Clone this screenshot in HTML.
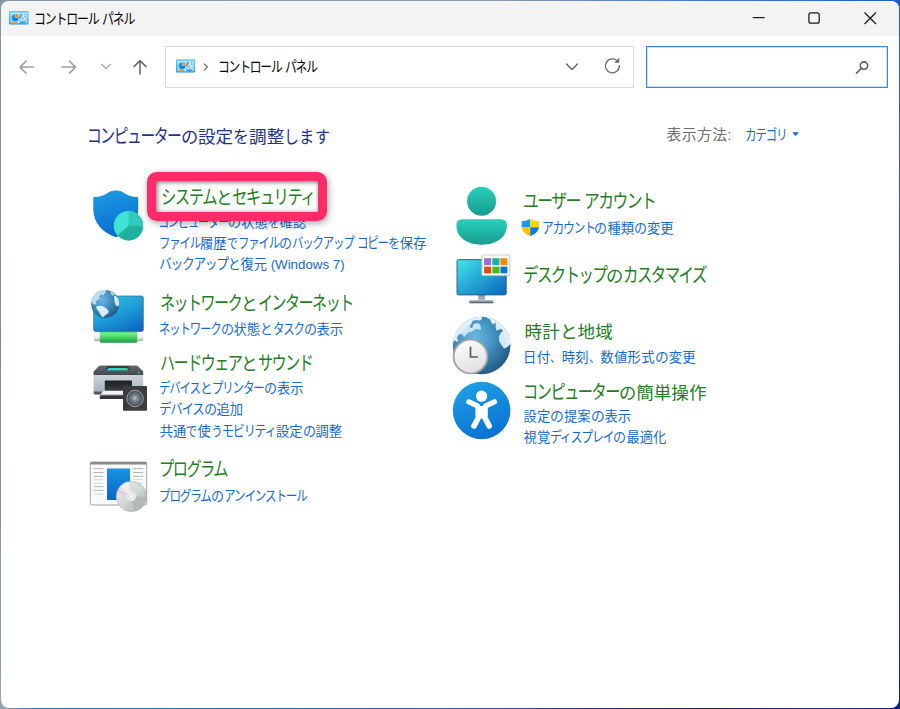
<!DOCTYPE html>
<html lang="ja">
<head>
<meta charset="utf-8">
<title>コントロール パネル</title>
<style>
html,body{margin:0;padding:0;}
body{width:900px;height:709px;overflow:hidden;position:relative;background:#8a98a8;
  font-family:"Liberation Sans","Noto Sans CJK JP",sans-serif;}
.edge{position:absolute;}
#win{position:absolute;left:1px;top:1px;width:897.7px;height:706.7px;background:#fff;border-radius:8px;overflow:hidden;}
#tb{position:absolute;left:0;top:0;width:100%;height:35px;background:#f3f3f3;}
.t{position:absolute;white-space:pre;}
.w{display:inline-block;vertical-align:baseline;white-space:pre;letter-spacing:0;}
.s{display:inline-block;transform-origin:0 50%;white-space:pre;}
svg{position:absolute;overflow:visible;}
.box{position:absolute;box-sizing:border-box;background:#fff;}
</style>
</head>
<body>
<div class="edge" style="left:0;top:699px;width:900px;height:10px;background:linear-gradient(to right,#8a9ab0 0,#3a70b0 4%,#2e5a98 50%,#16204c 80%,#1a3a9c 92%,#0c1f8c 100%)"></div>
<div class="edge" style="left:0;top:0;width:900px;height:10px;background:linear-gradient(to right,#8796a6 0%,#8a9aa8 55%,#4a7ec8 75%,#1c5fd0 100%)"></div>
<div class="edge" style="left:0;top:0;width:8px;height:709px;background:linear-gradient(to bottom,#8796a6 0,#7e8c9a 50%,#94a2b4 100%)"></div>
<div class="edge" style="left:892px;top:0;width:8px;height:709px;background:linear-gradient(to bottom,#1c5fd0 0,#2a58b8 20%,#2a4898 45%,#1a2a8c 80%,#0c1f8c 100%)"></div>
<div id="win"><div id="tb"></div></div>

<div class="box" style="left:165px;top:46px;width:469.4px;height:42px;border:1px solid #d9d9d9;"></div>
<div class="box" style="left:646px;top:46px;width:242px;height:42px;border:1px solid #3b86d6;box-shadow:inset 0 0 0 1px #cfe2f6;"></div>

<!-- window buttons -->
<svg style="left:0;top:0" width="900" height="100" viewBox="0 0 900 100" fill="none" stroke="#1a1a1a" stroke-width="1.25">
 <path d="M752.8 17.6H764.6"/>
 <rect x="808.9" y="12.9" width="10.3" height="10.3" rx="2"/>
 <path d="M864.5 12.5L876 24M876 12.5L864.5 24"/>
 <!-- nav arrows -->
 <g stroke="#a0a0a0" stroke-width="1.5" stroke-linecap="round" stroke-linejoin="round" transform="translate(0,0.6)">
  <path d="M33.5 66.5H20M26 60.5L20 66.5L26 72.5"/>
  <path d="M62 66.5H75.5M69.5 60.5L75.5 66.5L69.5 72.5"/>
  <path d="M101.5 63.5L106 68L110.5 63.5" stroke-width="1.3"/>
 </g>
 <g stroke="#666" stroke-width="1.5" stroke-linecap="round" stroke-linejoin="round">
  <path d="M140 74V60.6M134 66.6L140 60.6L146 66.6"/>
  <path d="M566.5 64L572 69.5L577.5 64"/>
  <path d="M204.3 63.8L207.5 67L204.3 70.2" stroke-width="1.1"/>
 </g>
 <!-- refresh -->
 <g stroke="#6a6a6a" stroke-width="1.3" stroke-linecap="round" stroke-linejoin="round">
  <path d="M619.4 65.6A7 7 0 1 1 617.4 60.9"/>
  <path d="M618.8 58.6V62.3H615" fill="#6a6a6a" stroke-width="1.1"/>
 </g>
 <!-- search icon -->
 <g stroke="#5c5c5c" stroke-width="1.6" stroke-linecap="round">
  <circle cx="864" cy="65.6" r="3.7"/>
  <path d="M861.3 68.4L856.4 73.2"/>
 </g>
</svg>

<svg width="0" height="0" style="left:0;top:0">
 <defs>
  <linearGradient id="cpo" x1="0" y1="0" x2="0" y2="1"><stop offset="0" stop-color="#62ccf5"/><stop offset="1" stop-color="#2f9cec"/></linearGradient>
  <linearGradient id="cpi" x1="0" y1="0" x2="0" y2="1"><stop offset="0" stop-color="#b4e6fb"/><stop offset="1" stop-color="#9ad2f5"/></linearGradient>
  <linearGradient id="cpp" x1="0" y1="0" x2="1" y2="1"><stop offset="0" stop-color="#27a6ee"/><stop offset="1" stop-color="#0768d4"/></linearGradient>
  <symbol id="cpicon" viewBox="0 0 20 14">
   <rect x="0" y="0" width="20" height="14" rx="1.2" fill="url(#cpo)"/>
   <rect x="1.4" y="1.6" width="17.2" height="10.9" rx="0.4" fill="url(#cpi)"/>
   <path d="M6.2 3.4A3.4 3.4 0 1 0 9.6 6.8H6.2Z" fill="url(#cpp)"/>
   <path d="M6.9 3.1A3.2 3.2 0 0 1 9.9 6.1H6.9Z" fill="#f08a0c"/>
   <path d="M9.9 6.6H11.8V3.6H13.6" fill="none" stroke="#1767c6" stroke-width="0.8"/>
   <rect x="13.9" y="3.1" width="1.7" height="0.9" fill="#fff"/><rect x="15.9" y="3.1" width="0.9" height="0.9" fill="#2d7fd8"/>
   <rect x="13.9" y="5.2" width="1.7" height="0.9" fill="#fff"/><rect x="15.9" y="5.2" width="0.9" height="0.9" fill="#2d7fd8"/>
   <rect x="13.7" y="7.3" width="0.9" height="0.9" fill="#2d7fd8"/><rect x="14.8" y="7.3" width="1.7" height="0.9" fill="#fff"/>
   <rect x="2.8" y="11" width="5.9" height="1" rx="0.4" fill="#ee8a10"/>
   <rect x="8.9" y="11" width="1.4" height="1" rx="0.3" fill="#fff"/>
   <rect x="10.9" y="11" width="5.8" height="1" rx="0.4" fill="#0f6fd3"/>
  </symbol>
 </defs>
</svg>
<svg style="left:9.4px;top:11px" width="19.7" height="13.8"><use href="#cpicon" width="19.7" height="13.8"/></svg>
<svg style="left:175.8px;top:59px" width="19.3" height="13.8"><use href="#cpicon" width="19.3" height="13.8"/></svg>


<div class="t" id="t_title" aria-label="コントロール パネル" style="left:34.4px;top:9px;font-size:13.2px;line-height:20px;color:#000"><span class="w" style="width:64.37px"><span class="s" style="transform:scaleX(0.8210);font-size:14.52px;letter-spacing:-1.45px">コントロール</span></span> <span class="w" style="width:32.19px"><span class="s" style="transform:scaleX(0.8210);font-size:14.52px;letter-spacing:-1.45px">パネル</span></span></div>
<div class="t" id="t_addr" aria-label="コントロール パネル" style="left:217.8px;top:57px;font-size:13.2px;line-height:20px;color:#000"><span class="w" style="width:63.55px"><span class="s" style="transform:scaleX(0.8105);font-size:14.52px;letter-spacing:-1.45px">コントロール</span></span> <span class="w" style="width:31.77px"><span class="s" style="transform:scaleX(0.8105);font-size:14.52px;letter-spacing:-1.45px">パネル</span></span></div>
<div class="t" id="t_head" aria-label="コンピューターの設定を調整します" style="left:87.3px;top:123px;font-size:17.6px;line-height:26px;color:#1e3287"><span class="w" style="width:93.47px"><span class="s" style="transform:scaleX(0.7524);font-size:19.71px;letter-spacing:-1.94px">コンピューター</span></span><span class="w" style="width:17.26px"><span class="s" style="transform:scaleX(0.9800)">の</span></span>設定<span class="w" style="width:15.85px"><span class="s" style="transform:scaleX(0.9000)">を</span></span>調整<span class="w" style="width:14.97px"><span class="s" style="transform:scaleX(0.8500)">し</span></span><span class="w" style="width:15.32px"><span class="s" style="transform:scaleX(0.8700)">ま</span></span><span class="w" style="width:14.97px"><span class="s" style="transform:scaleX(0.8500)">す</span></span></div>
<div class="t" id="t_view" aria-label="表示方法:" style="left:666.6px;top:124px;font-size:14.8px;line-height:22px;color:#6e6e6e;letter-spacing:0.39px">表示方法:</div>
<div class="t" id="t_cat" aria-label="カテゴリ" style="left:744.7px;top:125px;font-size:13.3px;line-height:20px;color:#1469d0"><span class="w" style="width:41.50px"><span class="s" style="transform:scaleX(0.8129);font-size:14.23px;letter-spacing:-1.46px">カテゴリ</span></span></div>
<div class="t" id="t_sys" aria-label="システムとセキュリティ" style="left:160.5px;top:184px;font-size:17.6px;line-height:26px;color:#237d23"><span class="w" style="width:55.04px"><span class="s" style="transform:scaleX(0.7817);font-size:19.71px;letter-spacing:-1.94px">システム</span></span><span class="w" style="width:16.73px"><span class="s" style="transform:scaleX(0.9500)">と</span></span><span class="w" style="width:82.33px"><span class="s" style="transform:scaleX(0.7817);font-size:19.71px;letter-spacing:-1.94px">セキュリティ</span></span></div>
<div class="t" id="l_sys1" aria-label="コンピューターの状態を確認" style="left:158.2px;top:212px;font-size:13.3px;line-height:20px;color:#1469d0"><span class="w" style="width:69.97px"><span class="s" style="transform:scaleX(0.7835);font-size:14.23px;letter-spacing:-1.46px">コンピューター</span></span><span class="w" style="width:13.03px"><span class="s" style="transform:scaleX(0.9800)">の</span></span>状態<span class="w" style="width:11.97px"><span class="s" style="transform:scaleX(0.9000)">を</span></span>確認</div>
<div class="t" id="l_sys2" aria-label="ファイル履歴でファイルのバックアップ コピーを保存" style="left:159.0px;top:233px;font-size:13.3px;line-height:20px;color:#1469d0"><span class="w" style="width:41.05px"><span class="s" style="transform:scaleX(0.8042);font-size:14.23px;letter-spacing:-1.46px">ファイル</span></span>履歴<span class="w" style="width:11.04px"><span class="s" style="transform:scaleX(0.8300)">で</span></span><span class="w" style="width:41.05px"><span class="s" style="transform:scaleX(0.8042);font-size:14.23px;letter-spacing:-1.46px">ファイル</span></span><span class="w" style="width:13.03px"><span class="s" style="transform:scaleX(0.9800)">の</span></span><span class="w" style="width:61.57px"><span class="s" style="transform:scaleX(0.8042);font-size:14.23px;letter-spacing:-1.46px">バックアップ</span></span> <span class="w" style="width:30.78px"><span class="s" style="transform:scaleX(0.8042);font-size:14.23px;letter-spacing:-1.46px">コピー</span></span><span class="w" style="width:11.97px"><span class="s" style="transform:scaleX(0.9000)">を</span></span>保存</div>
<div class="t" id="l_sys3" aria-label="バックアップと復元 (Windows 7)" style="left:159.0px;top:254px;font-size:13.3px;line-height:20px;color:#1469d0"><span class="w" style="width:68.78px"><span class="s" style="transform:scaleX(0.8983);font-size:14.23px;letter-spacing:-1.46px">バックアップ</span></span><span class="w" style="width:12.63px"><span class="s" style="transform:scaleX(0.9500)">と</span></span>復元 (Windows 7)</div>
<div class="t" id="t_net" aria-label="ネットワークとインターネット" style="left:159.9px;top:290px;font-size:17.6px;line-height:26px;color:#237d23"><span class="w" style="width:81.18px"><span class="s" style="transform:scaleX(0.7623);font-size:19.71px;letter-spacing:-1.94px">ネットワーク</span></span><span class="w" style="width:16.73px"><span class="s" style="transform:scaleX(0.9500)">と</span></span><span class="w" style="width:94.70px"><span class="s" style="transform:scaleX(0.7623);font-size:19.71px;letter-spacing:-1.94px">インターネット</span></span></div>
<div class="t" id="l_net1" aria-label="ネットワークの状態とタスクの表示" style="left:159.0px;top:319px;font-size:13.3px;line-height:20px;color:#1469d0"><span class="w" style="width:61.52px"><span class="s" style="transform:scaleX(0.8035);font-size:14.23px;letter-spacing:-1.46px">ネットワーク</span></span><span class="w" style="width:13.03px"><span class="s" style="transform:scaleX(0.9800)">の</span></span>状態<span class="w" style="width:12.63px"><span class="s" style="transform:scaleX(0.9500)">と</span></span><span class="w" style="width:30.76px"><span class="s" style="transform:scaleX(0.8035);font-size:14.23px;letter-spacing:-1.46px">タスク</span></span><span class="w" style="width:13.03px"><span class="s" style="transform:scaleX(0.9800)">の</span></span>表示</div>
<div class="t" id="t_hw" aria-label="ハードウェアとサウンド" style="left:159.9px;top:350px;font-size:17.6px;line-height:26px;color:#237d23"><span class="w" style="width:81.41px"><span class="s" style="transform:scaleX(0.7644);font-size:19.71px;letter-spacing:-1.94px">ハードウェア</span></span><span class="w" style="width:16.73px"><span class="s" style="transform:scaleX(0.9500)">と</span></span><span class="w" style="width:54.27px"><span class="s" style="transform:scaleX(0.7644);font-size:19.71px;letter-spacing:-1.94px">サウンド</span></span></div>
<div class="t" id="l_hw1" aria-label="デバイスとプリンターの表示" style="left:159.0px;top:378px;font-size:13.3px;line-height:20px;color:#1469d0"><span class="w" style="width:40.85px"><span class="s" style="transform:scaleX(0.8071);font-size:14.23px;letter-spacing:-1.46px">デバイス</span></span><span class="w" style="width:12.63px"><span class="s" style="transform:scaleX(0.9500)">と</span></span><span class="w" style="width:51.49px"><span class="s" style="transform:scaleX(0.8071);font-size:14.23px;letter-spacing:-1.46px">プリンター</span></span><span class="w" style="width:13.03px"><span class="s" style="transform:scaleX(0.9800)">の</span></span>表示</div>
<div class="t" id="l_hw2" aria-label="デバイスの追加" style="left:159.0px;top:399px;font-size:13.3px;line-height:20px;color:#1469d0"><span class="w" style="width:44.53px"><span class="s" style="transform:scaleX(0.8799);font-size:14.23px;letter-spacing:-1.46px">デバイス</span></span><span class="w" style="width:13.03px"><span class="s" style="transform:scaleX(0.9800)">の</span></span>追加</div>
<div class="t" id="l_hw3" aria-label="共通で使うモビリティ設定の調整" style="left:159.8px;top:421px;font-size:13.3px;line-height:20px;color:#1469d0">共通<span class="w" style="width:11.04px"><span class="s" style="transform:scaleX(0.8300)">で</span></span>使<span class="w" style="width:11.70px"><span class="s" style="transform:scaleX(0.8800)">う</span></span><span class="w" style="width:53.51px"><span class="s" style="transform:scaleX(0.8500);font-size:14.23px;letter-spacing:-1.46px">モビリティ</span></span>設定<span class="w" style="width:13.03px"><span class="s" style="transform:scaleX(0.9800)">の</span></span>調整</div>
<div class="t" id="t_prg" aria-label="プログラム" style="left:159.1px;top:456px;font-size:17.6px;line-height:26px;color:#237d23"><span class="w" style="width:68.06px"><span class="s" style="transform:scaleX(0.7720);font-size:19.71px;letter-spacing:-1.94px">プログラム</span></span></div>
<div class="t" id="l_prg1" aria-label="プログラムのアンインストール" style="left:159.0px;top:486px;font-size:13.3px;line-height:20px;color:#1469d0"><span class="w" style="width:51.80px"><span class="s" style="transform:scaleX(0.8173);font-size:14.23px;letter-spacing:-1.46px">プログラム</span></span><span class="w" style="width:13.03px"><span class="s" style="transform:scaleX(0.9800)">の</span></span><span class="w" style="width:82.73px"><span class="s" style="transform:scaleX(0.8173);font-size:14.23px;letter-spacing:-1.46px">アンインストール</span></span></div>
<div class="t" id="t_usr" aria-label="ユーザー アカウント" style="left:522.7px;top:188px;font-size:17.6px;line-height:26px;color:#237d23"><span class="w" style="width:56.70px"><span class="s" style="transform:scaleX(0.8030);font-size:19.71px;letter-spacing:-1.94px">ユーザー</span></span> <span class="w" style="width:71.27px"><span class="s" style="transform:scaleX(0.8030);font-size:19.71px;letter-spacing:-1.94px">アカウント</span></span></div>
<div class="t" id="l_usr1" aria-label="アカウントの種類の変更" style="left:541.6px;top:218px;font-size:13.3px;line-height:20px;color:#1469d0"><span class="w" style="width:52.79px"><span class="s" style="transform:scaleX(0.8274);font-size:14.23px;letter-spacing:-1.46px">アカウント</span></span><span class="w" style="width:13.03px"><span class="s" style="transform:scaleX(0.9800)">の</span></span>種類<span class="w" style="width:13.03px"><span class="s" style="transform:scaleX(0.9800)">の</span></span>変更</div>
<div class="t" id="t_desk" aria-label="デスクトップのカスタマイズ" style="left:522.7px;top:262px;font-size:17.6px;line-height:26px;color:#237d23"><span class="w" style="width:83.34px"><span class="s" style="transform:scaleX(0.7826);font-size:19.71px;letter-spacing:-1.94px">デスクトップ</span></span><span class="w" style="width:17.26px"><span class="s" style="transform:scaleX(0.9800)">の</span></span><span class="w" style="width:82.88px"><span class="s" style="transform:scaleX(0.7826);font-size:19.71px;letter-spacing:-1.94px">カスタマイズ</span></span></div>
<div class="t" id="t_clk" aria-label="時計と地域" style="left:524.5px;top:319px;font-size:17.6px;line-height:26px;color:#237d23;letter-spacing:0.06px">時計<span class="w" style="width:17.73px"><span class="s" style="transform:scaleX(1.0070)">と</span></span>地域</div>
<div class="t" id="l_clk1" aria-label="日付、時刻、数値形式の変更" style="left:523.0px;top:348px;font-size:13.3px;line-height:20px;color:#1469d0;letter-spacing:0.36px">日付<span class="w" style="width:11.30px"><span class="s" style="transform:scaleX(0.8500)">、</span></span>時刻<span class="w" style="width:11.30px"><span class="s" style="transform:scaleX(0.8500)">、</span></span>数値形式<span class="w" style="width:13.81px"><span class="s" style="transform:scaleX(1.0388)">の</span></span>変更</div>
<div class="t" id="t_ease" aria-label="コンピューターの簡単操作" style="left:522.9px;top:379px;font-size:17.6px;line-height:26px;color:#237d23"><span class="w" style="width:96.01px"><span class="s" style="transform:scaleX(0.7728);font-size:19.71px;letter-spacing:-1.94px">コンピューター</span></span><span class="w" style="width:17.26px"><span class="s" style="transform:scaleX(0.9800)">の</span></span>簡単操作</div>
<div class="t" id="l_ease1" aria-label="設定の提案の表示" style="left:523.6px;top:407px;font-size:13.3px;line-height:20px;color:#1469d0;letter-spacing:0.03px">設定<span class="w" style="width:13.81px"><span class="s" style="transform:scaleX(1.0388)">の</span></span>提案<span class="w" style="width:13.81px"><span class="s" style="transform:scaleX(1.0388)">の</span></span>表示</div>
<div class="t" id="l_ease2" aria-label="視覚ディスプレイの最適化" style="left:523.6px;top:427px;font-size:13.3px;line-height:20px;color:#1469d0">視覚<span class="w" style="width:63.28px"><span class="s" style="transform:scaleX(0.8375);font-size:14.23px;letter-spacing:-1.46px">ディスプレイ</span></span><span class="w" style="width:13.03px"><span class="s" style="transform:scaleX(0.9800)">の</span></span>最適化</div>

<!-- dropdown arrow -->
<svg style="left:792.1px;top:131.7px" width="8" height="5" viewBox="0 0 8 5"><path d="M0.2 0.2H6.9L3.55 3.9Z" fill="#0a68cc"/></svg>

<svg style="left:0;top:0" width="900" height="709" viewBox="0 0 900 709">
<defs>
 <linearGradient id="gShield" x1="0" y1="0" x2="0.3" y2="1"><stop offset="0" stop-color="#1c9ce2"/><stop offset="1" stop-color="#0a6fd2"/></linearGradient>
 <linearGradient id="gMon" x1="0.2" y1="0" x2="0.8" y2="1"><stop offset="0" stop-color="#2fc0e2"/><stop offset="0.5" stop-color="#1e9cd6"/><stop offset="1" stop-color="#0c68c6"/></linearGradient>
 <linearGradient id="gMon2" x1="0" y1="0" x2="1" y2="1"><stop offset="0" stop-color="#40e4ea"/><stop offset="1" stop-color="#0a64c0"/></linearGradient>
 <radialGradient id="gGlobe" cx="0.38" cy="0.36" r="0.68"><stop offset="0" stop-color="#6cb8e4"/><stop offset="0.5" stop-color="#4290c0"/><stop offset="1" stop-color="#1f5a82"/></radialGradient>
 <linearGradient id="gGreen" x1="0" y1="0" x2="0" y2="1"><stop offset="0" stop-color="#5ee874"/><stop offset="0.25" stop-color="#66f07c"/><stop offset="1" stop-color="#1a9a40"/></linearGradient>
 <linearGradient id="gPipe" x1="0" y1="0" x2="0" y2="1"><stop offset="0" stop-color="#ffffff"/><stop offset="0.6" stop-color="#ececec"/><stop offset="1" stop-color="#a8a8a8"/></linearGradient>
 <linearGradient id="gTeal" x1="0" y1="0" x2="0" y2="1"><stop offset="0" stop-color="#28d0ba"/><stop offset="1" stop-color="#179c8e"/></linearGradient>
 <linearGradient id="gEase" x1="0.3" y1="0" x2="0.7" y2="1"><stop offset="0" stop-color="#1e9fe6"/><stop offset="1" stop-color="#0870d2"/></linearGradient>
 <linearGradient id="gBlueDoc" x1="0" y1="0" x2="0" y2="1"><stop offset="0" stop-color="#1a92e2"/><stop offset="1" stop-color="#0866c6"/></linearGradient>
 <linearGradient id="gPrnTop" x1="0" y1="0" x2="0" y2="1"><stop offset="0" stop-color="#666a70"/><stop offset="1" stop-color="#44474c"/></linearGradient>
 <linearGradient id="gPrnBody" x1="0" y1="0" x2="0" y2="1"><stop offset="0" stop-color="#ccd3da"/><stop offset="1" stop-color="#a4aeb8"/></linearGradient>
 <linearGradient id="gPrnPanel" x1="0" y1="0" x2="1" y2="0"><stop offset="0" stop-color="#30dcec"/><stop offset="1" stop-color="#34d08c"/></linearGradient>
 <linearGradient id="gSlot" x1="0" y1="0" x2="0" y2="1"><stop offset="0" stop-color="#1c1e20"/><stop offset="1" stop-color="#3c4044"/></linearGradient>
 <radialGradient id="gCone" cx="0.5" cy="0.48" r="0.5"><stop offset="0" stop-color="#c4d0dc"/><stop offset="0.28" stop-color="#8c98a4"/><stop offset="0.6" stop-color="#6c747c"/><stop offset="1" stop-color="#5a6068"/></radialGradient>
 <linearGradient id="gClock" x1="0" y1="0" x2="0.4" y2="1"><stop offset="0" stop-color="#ffffff"/><stop offset="1" stop-color="#e2e2e2"/></linearGradient>
 <linearGradient id="gStand" x1="0" y1="0" x2="0" y2="1"><stop offset="0" stop-color="#8494a0"/><stop offset="1" stop-color="#b4c0c8"/></linearGradient>
 <linearGradient id="gBase" x1="0" y1="0" x2="0" y2="1"><stop offset="0" stop-color="#b8c4cc"/><stop offset="0.5" stop-color="#8c98a2"/><stop offset="1" stop-color="#343a40"/></linearGradient>
 <linearGradient id="gDisc" x1="0" y1="0" x2="1" y2="1"><stop offset="0" stop-color="#eef0f0"/><stop offset="0.5" stop-color="#d2d6d6"/><stop offset="1" stop-color="#a8acac"/></linearGradient>
 <radialGradient id="gLand" gradientUnits="userSpaceOnUse" cx="481.6" cy="345.5" r="28.8"><stop offset="0" stop-color="#b4dcf0"/><stop offset="0.7" stop-color="#c8e6f4"/><stop offset="1" stop-color="#e6f4fa"/></radialGradient>
 <clipPath id="cGlobe1"><circle cx="105.2" cy="303.9" r="14"/></clipPath>
 <clipPath id="cGlobe2"><circle cx="481.6" cy="345.5" r="28.8"/></clipPath>
 <clipPath id="cDisc"><circle cx="131.4" cy="496.4" r="15.2"/></clipPath>
</defs>

<!-- System & Security: shield + pie -->
<g id="ic_sys">
 <path d="M93.3 198 Q93.3 196.9 94.4 196.9 C100 196.9 105 195 109.3 191.9 C112.7 189.9 119.1 189.9 122.5 191.9 C126.8 195 131.8 196.9 137.1 196.9 Q138.2 196.9 138.2 198 L138.2 209 C138.2 223.5 128.5 232.5 116.6 237 C116.1 237.2 115.5 237.2 115 237 C103 232.5 93.3 223.5 93.3 209 Z" fill="url(#gShield)"/>
 <circle cx="128.5" cy="225.7" r="14.7" fill="#40e2d2"/>
 <path d="M128.5 225.7 L129 211 A14.7 14.7 0 0 1 143.2 226.3 Z" fill="#2fcbb8"/>
 <path d="M128.5 225.7 L143.2 226.3 A14.7 14.7 0 0 1 117.6 235.6 Z" fill="#1fb09e"/>
</g>

<!-- Network -->
<g id="ic_net">
 <rect x="93.9" y="332.8" width="49.5" height="8.2" rx="1.2" fill="url(#gPipe)"/>
 <rect x="99.8" y="331.6" width="37.4" height="11.2" rx="1.6" fill="url(#gGreen)"/>
 <rect x="93.7" y="296" width="49.6" height="35.4" rx="1.6" fill="url(#gMon)" stroke="#3a5c7c" stroke-width="0.7"/>
 <circle cx="105.2" cy="303.9" r="14" fill="url(#gGlobe)"/>
 <g clip-path="url(#cGlobe1)" fill="#d8eef8">
  <path d="M91.2 302.5 L91.7 297.6 L94.8 293.0 L99.4 289.9 L106.1 289.0 L106.1 290.5 L105.2 293.0 L103.4 295.3 L100.7 294.8 L98.9 296.6 L100.3 298.5 L97.6 299.8 L95.7 302.1 L96.6 304.3 L94.4 304.8 L93.0 303.4 Z" opacity="0.8"/>
  <path d="M96.2 306.6 L98.9 305.7 L102.5 306.1 L105.7 307.9 L108.8 311.1 L107.9 313.4 L105.7 314.7 L103.4 317.0 L101.6 316.5 L100.3 314.3 L98.5 311.1 L96.6 308.8 Z"/>
  <path d="M113.8 296.6 L115.6 295.7 L117.6 297.6 L119.7 300.7 L119.7 304.8 L117.4 306.6 L115.6 305.2 L114.7 302.5 L114.3 299.4 Z" opacity="0.95"/>
  <path d="M110.2 291.7 L112.9 292.6 L115.2 294.8 L112.9 295.7 L111.1 294.4 Z" opacity="0.75"/>
 </g>
</g>

<!-- Hardware: printer + speaker -->
<g id="ic_hw">
 <path d="M93.6 375 H143.2 V392 Q143.2 394.4 141 394.4 H95.8 Q93.6 394.4 93.6 392 Z" fill="url(#gPrnBody)"/>
 <path d="M93.6 391.5 H143.2 V392.4 Q143.2 394.6 141 394.6 H95.8 Q93.6 394.6 93.6 392.4 Z" fill="#55595e"/>
 <path d="M102 365.5 H136.1 Q137.2 365.5 138 366.3 L143.2 371.6 V375 H93.6 V371.6 L98.8 366.3 Q99.6 365.5 100.7 365.5 Z" fill="url(#gPrnTop)"/>
 <path d="M107.4 366 H128.4 L130.2 371 H105.1 Z" fill="#3a3c40"/>
 <path d="M108.9 368 H126.9 L129.2 370.6 H106.2 Z" fill="url(#gPrnPanel)"/>
 <rect x="137.8" y="372" width="1.8" height="1.8" fill="#2fc02f"/>
 <rect x="104.8" y="380.4" width="27.2" height="10.6" rx="0.8" fill="url(#gSlot)"/>
 <path d="M103.6 390.8 H123 V394.6 H100.4 Z" fill="#f4f4f4"/>
 <rect x="99.8" y="395.3" width="23.4" height="3.8" rx="0.6" fill="#33363a"/>
 <rect x="123" y="386.1" width="24" height="24.7" rx="1" fill="#3c3c3c"/>
 <circle cx="135" cy="398.5" r="8.2" fill="#4a4e54" stroke="#c8ccd2" stroke-width="0.7"/>
 <circle cx="135" cy="398.5" r="6.6" fill="url(#gCone)"/>
</g>

<!-- Programs -->
<g id="ic_prg">
 <rect x="90.3" y="462" width="56.4" height="43" rx="1.6" fill="#fafafa" stroke="#8e8e8e" stroke-width="0.8"/>
 <path d="M90.3 464.4 V463.6 Q90.3 462 91.9 462 H145.1 Q146.7 462 146.7 463.6 V464.4 Z" fill="#8c8884"/>
 <g stroke-width="0.9" fill="none">
  <path d="M93.5 468.6H103.4M93.5 472.5H103.4M93.5 476.4H103.4M93.5 486.6H103.4M93.5 490.4H103.4M133 468.6H143.2M133 472.5H143.2M133 476.4H143.2" stroke="#aeaeae"/>
  <path d="M93.5 479.7H103.4M93.5 483.2H103.4M93.5 494H103.4M133 479.7H143.2M133 483.2H143.2" stroke="#d4d4d4"/>
 </g>
 <rect x="107" y="468.5" width="23.1" height="31.4" rx="0.6" fill="url(#gBlueDoc)"/>
 <circle cx="131.4" cy="496.4" r="15.2" fill="url(#gDisc)"/>
 <g clip-path="url(#cDisc)">
  <path d="M131.4 496.4 L150 496.4 L150 520 L136 520 Z" fill="#b4b8b8" opacity="0.9"/>
  <path d="M131.4 496.4 L124 515 L136 520 Z" fill="#c4c8c8" opacity="0.7"/>
  <path d="M131.4 496.4 L110.6 489.6 L111.6 486.6 Z" fill="#f4b0ec" opacity="0.9"/>
  <path d="M131.4 496.4 L143.6 484 L145 485.4 Z" fill="#c0f4cc" opacity="0.9"/>
  <path d="M131.4 496.4 L118 484 L128 479 Z" fill="#f4f6f6" opacity="0.7"/>
 </g>
 <circle cx="131.4" cy="496.4" r="15.2" fill="none" stroke="#a0a4a4" stroke-width="0.5"/>
 <circle cx="131.4" cy="496.4" r="4.3" fill="#e6eaea" stroke="#f8f8f8" stroke-width="0.6"/>
 <circle cx="131.4" cy="496.4" r="1.7" fill="#ffffff" stroke="#d0d4d4" stroke-width="0.4"/>
</g>

<!-- User -->
<g id="ic_usr">
 <circle cx="481.6" cy="201.2" r="14.5" fill="url(#gTeal)"/>
 <path d="M462.4 219.3 H500.9 Q506.9 219.3 506.9 225.3 C506.9 238 495.5 244.7 481.6 244.7 C467.8 244.7 456.4 238 456.4 225.3 Q456.4 219.3 462.4 219.3 Z" fill="url(#gTeal)"/>
</g>

<!-- UAC shield -->
<g id="ic_uac">
 <clipPath id="cUac"><path d="M521.7 221.2 C525.2 221.2 528 220.2 530.3 218.7 C532.6 220.2 535.4 221.2 538.9 221.2 V226.4 C538.9 231.2 535.4 234 530.3 235.9 C525.2 234 521.7 231.2 521.7 226.4 Z"/></clipPath>
 <g clip-path="url(#cUac)">
  <rect x="521" y="218" width="9.2" height="9.3" fill="#1a9ae6"/>
  <rect x="530.2" y="218" width="9.2" height="9.3" fill="#ffd400"/>
  <rect x="521" y="227.3" width="9.2" height="9.3" fill="#ffc200"/>
  <rect x="530.2" y="227.3" width="9.2" height="9.3" fill="#0a7ede"/>
 </g>
</g>

<!-- Desktop -->
<g id="ic_desk">
 <rect x="478.3" y="294.5" width="6.8" height="6" fill="url(#gStand)"/>
 <rect x="469.2" y="300" width="24.4" height="3.2" rx="1" fill="url(#gBase)"/>
 <rect x="457" y="259.6" width="49.2" height="35.3" rx="1.6" fill="url(#gMon2)" stroke="#2f5674" stroke-width="0.9"/>
 <rect x="481.9" y="255" width="28" height="20.6" rx="0.6" fill="#ffffff" stroke="#bcbcbc" stroke-width="0.8"/>
 <rect x="484.1" y="258.2" width="7" height="7" fill="#9a6cd8"/>
 <rect x="492.3" y="258.2" width="7.2" height="7" fill="#1ab4a4"/>
 <rect x="500.4" y="258.2" width="7" height="7" fill="#f08c0c"/>
 <rect x="484.1" y="266.6" width="7" height="6.8" fill="#e04c14"/>
 <rect x="492.3" y="266.6" width="7.2" height="6.8" fill="#4cb814"/>
 <rect x="500.4" y="266.6" width="7" height="6.8" fill="#0a78d8"/>
</g>

<!-- Clock & region -->
<g id="ic_clk">
 <circle cx="481.6" cy="345.5" r="28.8" fill="url(#gGlobe)"/>
 <g clip-path="url(#cGlobe2)" fill="url(#gLand)">
  <path d="M451.8 342.6 L450.9 329.2 L462.4 315.8 L481.6 313.8 L482.0 319.1 L479.6 320.5 L475.8 320.1 L472.4 321.0 L471.5 323.4 L469.6 325.8 L470.5 328.2 L472.4 327.7 L473.4 324.4 L476.8 322.9 L480.1 324.4 L481.1 329.2 L478.7 329.7 L476.3 328.7 L473.9 330.6 L471.0 332.1 L468.1 332.5 L465.7 334.9 L464.3 337.3 L462.4 334.4 L459.5 334.0 L457.6 335.9 L457.1 338.8 L458.5 340.7 L457.1 342.1 L455.2 340.2 L453.8 341.6 Z"/>
  <path d="M486.4 315.8 L486.8 318.1 L490.2 319.6 L491.6 322.9 L493.1 324.4 L495.9 322.5 L495.5 326.8 L496.4 330.6 L498.8 330.1 L500.7 328.7 L503.1 330.6 L500.5 333.0 L498.8 336.8 L499.3 341.6 L501.7 345.5 L504.1 348.4 L507.4 346.9 L509.8 344.5 L514.2 343.6 L514.2 324.4 L501.7 313.8 Z"/>
 </g>
 <circle cx="470.5" cy="356.5" r="16.9" fill="url(#gClock)" stroke="#a4a4a4" stroke-width="1.9"/>
 <path d="M470.5 347.2 V357 H477.2" fill="none" stroke="#585858" stroke-width="1.7" stroke-linecap="round" stroke-linejoin="round"/>
</g>

<!-- Ease of access -->
<g id="ic_ease">
 <circle cx="481.6" cy="410.5" r="28.8" fill="url(#gEase)"/>
 <g fill="#fff" stroke="#fff" stroke-linecap="round">
  <circle cx="481.6" cy="396.2" r="5.6" stroke="none"/>
  <path d="M468.8 401.8 L477.4 405.8 M494.4 401.8 L485.8 405.8" stroke-width="5.2" fill="none"/>
  <path d="M475.4 404.4 Q481.6 407.6 487.8 404.4 V415.5 L486.6 418.2 H476.6 L475.4 415.5 Z" stroke="none"/>
  <path d="M478.9 416.5 L474 426 M484.3 416.5 L489.2 426" stroke-width="5.6" fill="none"/>
 </g>
</g>
</svg>


<!-- highlight box -->
<div id="hl" style="position:absolute;left:147px;top:172px;width:162px;height:30.8px;border:9px solid #fd2c69;border-radius:9.5px;box-shadow:1px 2px 7px rgba(0,0,0,0.38);"><div style="position:absolute;left:0;top:0;right:0;bottom:0;box-shadow:inset 1px 1px 5px rgba(0,0,0,0.6);"></div></div>

</body>
</html>
